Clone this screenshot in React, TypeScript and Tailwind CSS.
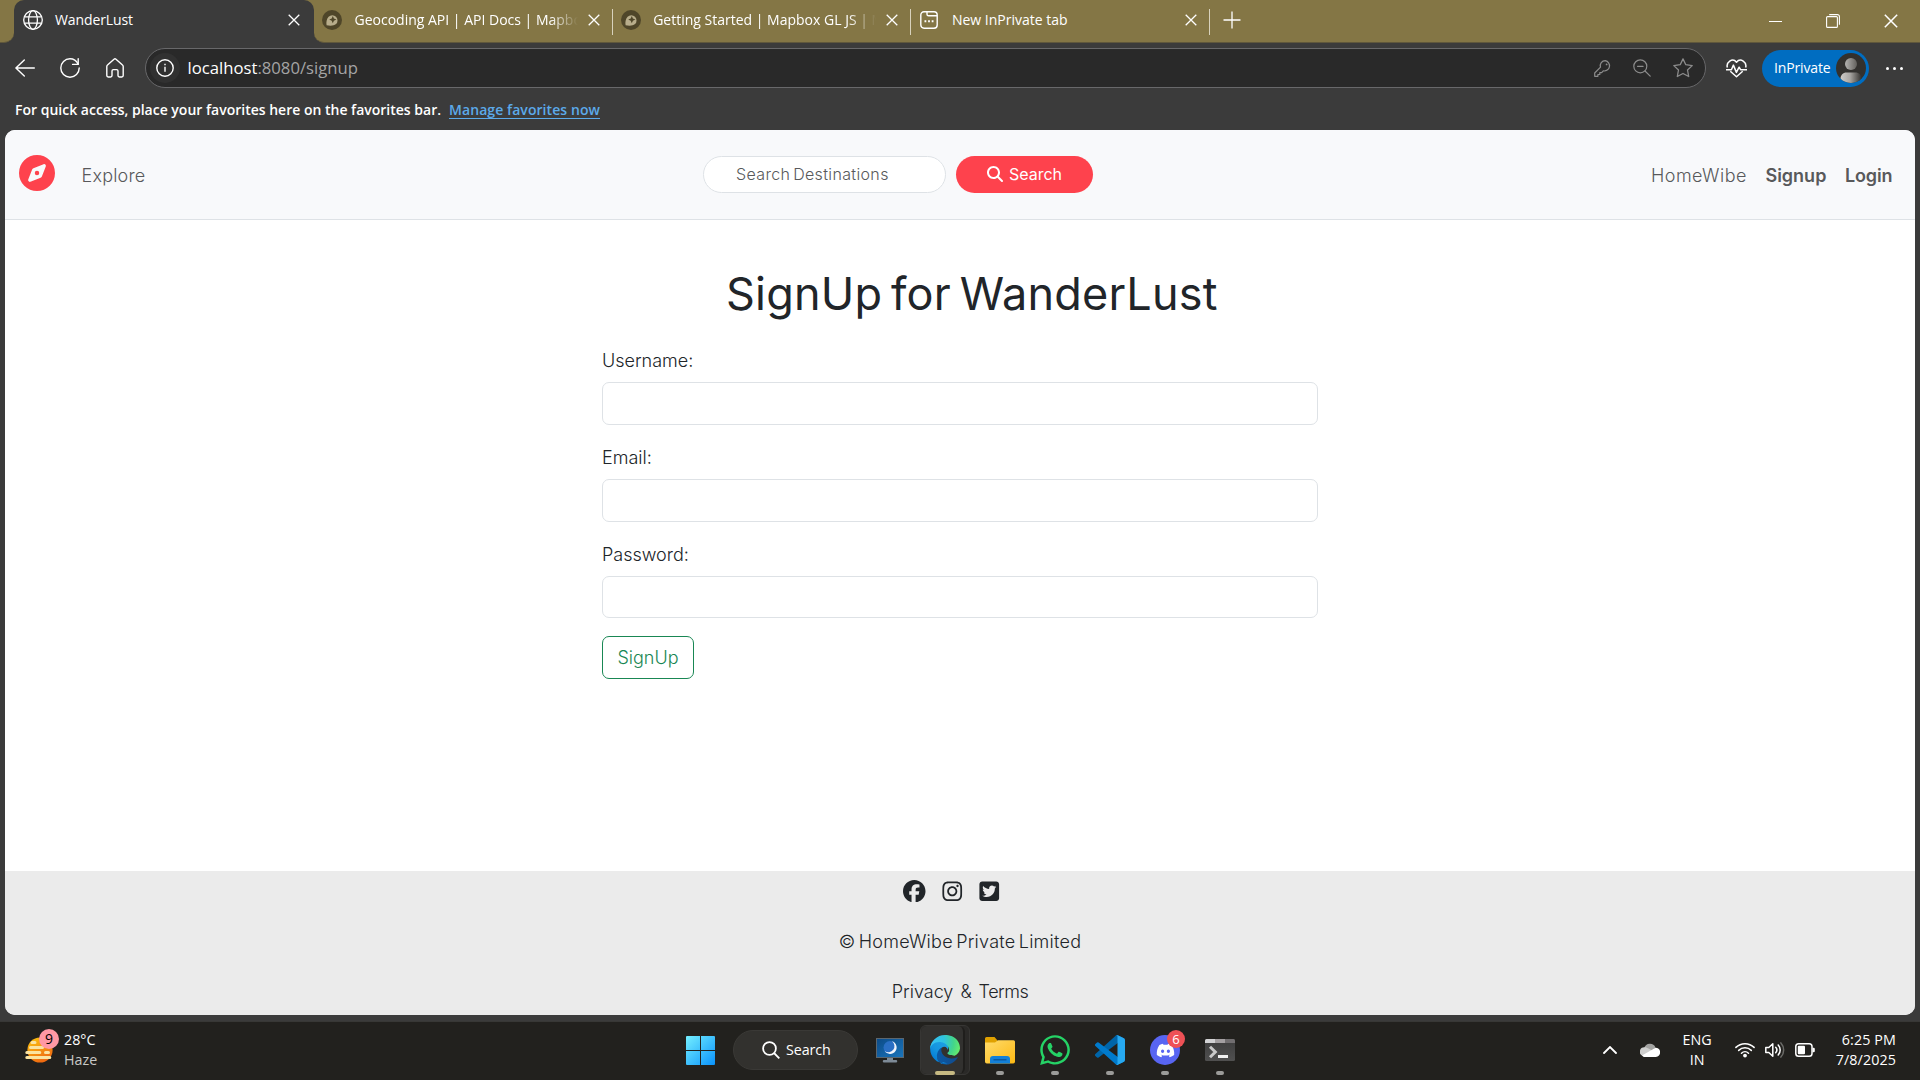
import React from 'react';
import type { ReactNode } from 'react';
import {
  FaCompass,
  FaDiscord,
  FaFacebook,
  FaInstagram,
  FaMagnifyingGlass,
  FaSquareTwitter,
  FaWhatsapp,
} from 'react-icons/fa6';

/* ---------- Browser icons ---------- */

function CloseIcon({ className }: { className: string }) {
  return (
    <svg viewBox="0 0 12 12" className={className} fill="none" stroke="currentColor" strokeWidth="1.3">
      <path d="M.7.7l10.6 10.6M11.3.7L.7 11.3" />
    </svg>
  );
}

function GlobeIcon() {
  return (
    <svg viewBox="0 0 20 20" className="size-5" fill="none" stroke="currentColor" strokeWidth="1.3">
      <circle cx="10" cy="10" r="9.3" />
      <ellipse cx="10" cy="10" rx="4.4" ry="9.3" />
      <path d="M1.6 6.8h16.8M1.6 13.2h16.8" />
    </svg>
  );
}

function MapboxIcon() {
  return (
    <svg viewBox="0 0 20 20" className="size-5">
      <circle cx="10" cy="10" r="10" fill="#4f4629" />
      <path d="M4.6 15.3c-.6-3 0-6.6 2-8.6a5.2 5.2 0 017.4 7.4c-2.1 2-6.2 2-9.4 1.2z" fill="#b8ad8b" />
      <path d="M10.8 6l1.1 2.5 2.5 1.1-2.5 1.1-1.1 2.5-1.1-2.5-2.5-1.1 2.5-1.1z" fill="#4f4629" />
    </svg>
  );
}

function InPrivateTabIcon() {
  return (
    <svg viewBox="0 0 18 18" className="mx-px size-[18px]" fill="none" stroke="currentColor" strokeWidth="1.4">
      <rect x=".8" y=".8" width="16.4" height="16.4" rx="3.2" />
      <path d="M7 1v2.2A1.6 1.6 0 008.6 4.8H17" />
      <path d="M4.5 10.3h1.8M8.1 10.3h1.8M11.7 10.3h1.8" strokeWidth="1.9" />
    </svg>
  );
}

function BackIcon() {
  return (
    <svg viewBox="0 0 20 18" className="h-[18px] w-5" fill="none" stroke="currentColor" strokeWidth="1.4" strokeLinecap="round" strokeLinejoin="round">
      <path d="M9.3.9L.9 9l8.4 8.1M1 9h18.3" />
    </svg>
  );
}

function ReloadIcon() {
  return (
    <svg viewBox="0 0 20 20" className="size-5" fill="none" stroke="currentColor" strokeWidth="1.4" strokeLinecap="round" strokeLinejoin="round">
      <path d="M19.200 10A9.200 9.200 0 1110 .8c3.500 0 6.500 2 8.100 5.400" />
      <path d="M18.200.8v5.600h-5.600" />
    </svg>
  );
}

function HomeIcon() {
  return (
    <svg viewBox="0 0 18 20" className="h-5 w-[18px]" fill="none" stroke="currentColor" strokeWidth="1.4" strokeLinejoin="round">
      <path d="M.8 8.500c0-.6.2-1.100.7-1.500L8 1.300a1.500 1.500 0 012 0L16.500 7c.5.4.7.900.7 1.500V17.600c0 .8-.6 1.400-1.400 1.400h-2.400c-.8 0-1.400-.6-1.400-1.400V13c0-.8-.6-1.400-1.400-1.400H7.400C6.600 11.600 6 12.200 6 13v4.600c0 .8-.6 1.400-1.400 1.400H2.200C1.400 19 .8 18.400.8 17.600z" />
    </svg>
  );
}

function InfoIcon() {
  return (
    <svg viewBox="0 0 18 18" className="size-[18px]" fill="none" stroke="currentColor" strokeWidth="1.4">
      <circle cx="9" cy="9" r="8.2" />
      <path d="M9 7.8v5M9 4.7v1.5" />
    </svg>
  );
}

function KeyIcon() {
  return (
    <svg viewBox="0 0 17 17" className="size-[17px]" fill="none" stroke="currentColor" strokeWidth="1.2" strokeLinejoin="round">
      <path d="M11.300.7a5 5 0 00-4.800 6.500L.7 13v3.300h3.200v-1.800h1.900v-1.900h1.900l1.600-1.700A5 5 0 1011.300.7z" />
      <circle cx="12.600" cy="4.400" r=".9" fill="currentColor" stroke="none" />
    </svg>
  );
}

function ZoomOutIcon() {
  return (
    <svg viewBox="0 0 18 18" className="size-[18px]" fill="none" stroke="currentColor" strokeWidth="1.2" strokeLinecap="round">
      <circle cx="7.300" cy="7.300" r="6.500" />
      <path d="M12 12l5.200 5.200M4.500 7.300h5.600" />
    </svg>
  );
}

function StarIcon() {
  return (
    <svg viewBox="0 0 20 20" className="size-5" fill="none" stroke="currentColor" strokeWidth="1.3" strokeLinejoin="round">
      <path d="M10 .9l2.800 5.800 6.400.9-4.700 4.400 1.200 6.500L10 15.500l-5.700 3 1.200-6.500L.8 7.600l6.400-.9z" />
    </svg>
  );
}

function HeartPulseIcon() {
  return (
    <svg viewBox="0 0 21 19" className="h-[19px] w-[21px]" fill="none" stroke="currentColor" strokeWidth="1.5" strokeLinejoin="round">
      <path d="M1.400 8.600C-.2 3.900 6.300-2 10.500 3.200c4.200-5.200 10.700.7 9.100 5.400" />
      <path d="M0 10.700h5.400l2-4.600 3 7.300 2.700-5.200 1.500 2.500H21" />
      <path d="M4.300 12.300l6.200 5.500 6.200-5.500" />
    </svg>
  );
}

function Avatar() {
  return (
    <svg viewBox="0 0 30 30" className="size-[30px]">
      <defs>
        <linearGradient id="avatar-head">
          <stop offset="0" stopColor="#b5b3b0" />
          <stop offset="1" stopColor="#62605c" />
        </linearGradient>
        <linearGradient id="avatar-body">
          <stop offset="0" stopColor="#cfccc8" />
          <stop offset=".45" stopColor="#aaa7a3" />
          <stop offset="1" stopColor="#33312e" />
        </linearGradient>
        <clipPath id="avatar-clip">
          <circle cx="15" cy="15" r="15" />
        </clipPath>
      </defs>
      <g clipPath="url(#avatar-clip)">
        <rect width="30" height="30" fill="#33312e" />
        <circle cx="15" cy="11" r="6" fill="url(#avatar-head)" />
        <path d="M4.500 30v-4c0-4 2.500-6.500 6-6.500h9c3.500 0 6 2.500 6 6.500v4z" fill="url(#avatar-body)" />
      </g>
    </svg>
  );
}

/* ---------- Taskbar icons ---------- */

function HazeIcon() {
  return (
    <svg viewBox="0 0 28 26" className="h-[26px] w-7">
      <defs>
        <linearGradient id="haze-sun" x1="0" y1="0" x2=".5" y2="1">
          <stop offset="0" stopColor="#fdc910" />
          <stop offset="1" stopColor="#ef6a10" />
        </linearGradient>
      </defs>
      <circle cx="15" cy="13" r="12.600" fill="url(#haze-sun)" />
      <g stroke="#fbe3a0" strokeWidth="3" strokeLinecap="round">
        <path d="M7 5.500h3M5.500 10.500h12M1.800 15.500h13M20.500 15.500h3M1.800 20.500h23" />
      </g>
    </svg>
  );
}

function WindowsIcon() {
  return (
    <svg viewBox="0 0 29 29" className="size-[29px]">
      <defs>
        <linearGradient id="win" x1="0" y1="0" x2="1" y2="1">
          <stop offset="0" stopColor="#74efff" />
          <stop offset="1" stopColor="#0a92fb" />
        </linearGradient>
      </defs>
      <path d="M1 0h13v14H0V1a1 1 0 011-1zM15 0h13a1 1 0 011 1v13H15zM0 15h14v14H1a1 1 0 01-1-1zM15 15h14v13a1 1 0 01-1 1H15z" fill="url(#win)" />
    </svg>
  );
}

function MonitorMoonIcon() {
  return (
    <svg viewBox="0 0 28 25" className="h-[25px] w-7">
      <defs>
        <linearGradient id="screen" x1="0" y1="0" x2="1" y2="1">
          <stop offset="0" stopColor="#0c4a86" />
          <stop offset="1" stopColor="#1a76bd" />
        </linearGradient>
      </defs>
      <path d="M11 19h6v3h3a1 1 0 010 2.500H8A1 1 0 018 22h3z" fill="#7d8a96" />
      <rect x=".5" y=".5" width="27" height="19" fill="url(#screen)" stroke="#5b6770" />
      <circle cx="14" cy="9.500" r="6.500" fill="#2a6fc4" />
      <path d="M16 3.200a6.500 6.500 0 11-7.300 9.800A6 6 0 0016 3.200z" fill="#f1f5fb" />
    </svg>
  );
}

function EdgeIcon() {
  return (
    <svg viewBox="0 0 256 256" className="size-[30px]">
      <defs>
        <linearGradient id="edge-a" x1="63" y1="177" x2="241" y2="177" gradientUnits="userSpaceOnUse">
          <stop offset="0" stopColor="#0c59a4" />
          <stop offset="1" stopColor="#114a8b" />
        </linearGradient>
        <linearGradient id="edge-b" x1="152" y1="100" x2="46" y2="230" gradientUnits="userSpaceOnUse">
          <stop offset="0" stopColor="#1b9de2" />
          <stop offset=".4" stopColor="#1595df" />
          <stop offset="1" stopColor="#0078d4" />
        </linearGradient>
        <radialGradient id="edge-c" cx="30" cy="55" r="230" gradientUnits="userSpaceOnUse">
          <stop offset="0" stopColor="#35c1f1" />
          <stop offset=".4" stopColor="#2fc2df" />
          <stop offset=".75" stopColor="#43d58a" />
          <stop offset="1" stopColor="#66eb6e" />
        </radialGradient>
      </defs>
      <path d="M231 190a94 94 0 01-10 5 102 102 0 01-36 6c-48 0-89-33-89-75a32 32 0 0117-28C69 100 58 145 58 171c0 75 69 82 84 82 8 0 20-2 27-5a128 128 0 0067-53c3-4-1-7-5-5z" fill="url(#edge-a)" />
      <path d="M106 241a79 79 0 01-23-21A81 81 0 01113 99c3-2 8-4 15-4a31 31 0 0125 12 32 32 0 016 19c0 0 26-98-71-98-42 0-79 40-79 80a130 130 0 0012 56 128 128 0 00157 67 76 76 0 01-60-6z" fill="url(#edge-b)" transform="translate(-8 6)" />
      <path d="M152 149c-1 1-3 3-3 7 0 3 2 6 6 9 19 13 55 12 55 12a79 79 0 0046-61c0-29-10-48-14-56C217 11 162 0 128 0A128 128 0 000 126c1-36 37-66 80-66 4 0 24 0 43 10 17 9 26 20 32 31 6 11 8 25 8 30 0 6-3 14-11 18z" fill="url(#edge-c)" />
    </svg>
  );
}

function FolderIcon() {
  return (
    <svg viewBox="0 0 30 27" className="h-[27px] w-[30px]">
      <defs>
        <linearGradient id="folder" x1="0" y1="0" x2="1" y2="1">
          <stop offset="0" stopColor="#ffdb6b" />
          <stop offset="1" stopColor="#fdb913" />
        </linearGradient>
      </defs>
      <path d="M0 1.500A1.500 1.500 0 011.500 0h8l3 3.500V8H0z" fill="#e0a100" />
      <path d="M0 5.500h10l3-2.200h15.500A1.500 1.500 0 0130 4.800v20a1.800 1.800 0 01-1.800 1.700H1.800A1.800 1.800 0 010 24.800z" fill="url(#folder)" />
      <path d="M5 26.500V22a3 3 0 013-3h14a3 3 0 013 3v4.500z" fill="#1380d8" />
      <path d="M8.500 22.800h13" stroke="#0a4f94" strokeWidth="1.2" />
    </svg>
  );
}

function VsCodeIcon() {
  return (
    <svg viewBox="0 0 100 100" className="size-[30px]">
      <path d="M96.500 10.800L75.900.9a6.200 6.200 0 00-7.100 1.200L1.300 63.600a4.200 4.200 0 000 6.200l5.500 5a4.200 4.200 0 005.300.2L93.400 13.400c2.700-2.100 6.600-.1 6.600 3.300v-.3c0-2.400-1.400-4.600-3.500-5.600z" fill="#0065a9" />
      <path d="M96.500 89.200l-20.600 9.900a6.200 6.200 0 01-7.100-1.200L1.300 36.400a4.200 4.200 0 010-6.200l5.500-5a4.200 4.200 0 015.300-.2l81.300 61.600c2.700 2.100 6.600.1 6.600-3.300v.3c0 2.400-1.400 4.600-3.500 5.600z" fill="#007acc" />
      <path d="M75.900 99.100a6.200 6.200 0 01-7.100-1.200c2.300 2.300 6.200.7 6.200-2.600V4.700c0-3.300-3.900-4.900-6.200-2.600A6.200 6.200 0 0175.900.9l20.600 9.900a6.200 6.200 0 013.500 5.600v67.200a6.200 6.200 0 01-3.500 5.600z" fill="#27a9f1" />
    </svg>
  );
}

function TerminalIcon() {
  return (
    <svg viewBox="0 0 30 22" className="h-[22px] w-[30px]">
      <defs>
        <linearGradient id="term" x1="0" y1="0" x2="0" y2="1">
          <stop offset="0" stopColor="#3d3d3d" />
          <stop offset="1" stopColor="#505050" />
        </linearGradient>
      </defs>
      <rect width="30" height="22" rx="1.500" fill="url(#term)" />
      <path d="M1.500 0H10v4H0V1.500A1.500 1.500 0 011.500 0z" fill="#d2d2d4" />
      <path d="M10 0h10v4H10z" fill="#a4a0a2" />
      <path d="M20 0h8.500A1.500 1.500 0 0130 1.500V4H20z" fill="#716e70" />
      <path d="M5 7.800L10.300 13 5 18.200" fill="none" stroke="#c9c9c9" strokeWidth="3" />
      <path d="M13 16h10v3H13z" fill="#f0f0f0" />
    </svg>
  );
}

function CloudIcon() {
  return (
    <svg viewBox="0 0 20 14" className="h-3.5 w-5">
      <path d="M4.200 5A6 6 0 0115.500 4.500L10 9z" fill="#a3a3a1" />
      <path d="M4.300 4.200c2 0 3.200.6 4.700 1.600l5 3L3 13a4.500 4.500 0 011.300-8.800z" fill="#cfcfce" />
      <path d="M2 12.400L11.600 7l3.700-2.300a4.600 4.600 0 01.5 9.200H4.500c-1 0-1.900-.6-2.500-1.500z" fill="#fff" />
    </svg>
  );
}

function WifiIcon() {
  return (
    <svg viewBox="0 0 20 16" className="h-4 w-5" fill="none" stroke="currentColor" strokeWidth="1.5" strokeLinecap="round">
      <path d="M.9 5.400a13 13 0 0118.200 0M3.700 8.400a9 9 0 0112.600 0M6.500 11.200a5 5 0 017 0" />
      <circle cx="10" cy="13.600" r="1.900" fill="currentColor" stroke="none" />
    </svg>
  );
}

function SpeakerIcon() {
  return (
    <svg viewBox="0 0 20 16" className="h-4 w-5" fill="none" stroke="currentColor" strokeWidth="1.5" strokeLinecap="round" strokeLinejoin="round">
      <path d="M.8 5.500h3l4-3.700v12.400l-4-3.700h-3z" />
      <path d="M10.700 5.300a4 4 0 010 5.400M13.200 3a7.300 7.300 0 010 10" />
      <path d="M15.900.9a10.500 10.500 0 010 14.200" stroke="#6b6b68" />
    </svg>
  );
}

function BatteryIcon() {
  return (
    <svg viewBox="0 0 20 14" className="h-3.5 w-5">
      <rect x=".8" y=".8" width="16.200" height="12.400" rx="2.800" fill="none" stroke="currentColor" strokeWidth="1.5" />
      <rect x="2.800" y="2.800" width="7.200" height="8.400" rx="1" fill="currentColor" />
      <path d="M17.500 4.700h1a1.300 1.300 0 011.300 1.300v2a1.300 1.300 0 01-1.300 1.300h-1z" fill="currentColor" />
    </svg>
  );
}

/* ---------- Browser chrome ---------- */

function Tab({ icon, title, fade }: { icon: ReactNode; title: string; fade?: boolean }) {
  return (
    <div className="flex h-full w-[298.7px] shrink-0 items-center pb-[3px] pl-2">
      <span className="flex w-5 shrink-0">{icon}</span>
      <span
        className={
          fade
            ? 'ml-[12.500px] w-[223px] overflow-hidden whitespace-nowrap [mask-image:linear-gradient(to_right,black_195px,transparent)]'
            : 'ml-[12.500px] w-[223px] overflow-hidden whitespace-nowrap'
        }
      >
        {title}
      </span>
      <CloseIcon className="ml-2.5 size-3" />
      <span className="ml-auto h-[26px] w-px translate-y-[2px] bg-[#d8d2bd]" />
    </div>
  );
}

function TitleBar() {
  return (
    <div className="flex h-[43px] bg-[linear-gradient(#847645_50%,#3b3b3b_50%)] text-sm text-white">
      <div className="w-3.5 rounded-br-[10px] border-b border-[#5f573c] bg-[#847645]" />
      <div className="flex w-[300px] items-center rounded-t-[10px] bg-[#3b3b3b] pb-[3px] pl-[9px]">
        <GlobeIcon />
        <span className="ml-3 w-[226px] tracking-[-0.1px]">WanderLust</span>
        <CloseIcon className="ml-[7px] size-3" />
      </div>
      <div className="flex flex-1 items-center rounded-bl-[10px] border-b border-[#5f573c] bg-[#847645]">
        <Tab icon={<MapboxIcon />} title="Geocoding API | API Docs | Mapbox" fade />
        <Tab icon={<MapboxIcon />} title="Getting Started | Mapbox GL JS | M" fade />
        <Tab icon={<InPrivateTabIcon />} title="New InPrivate tab" />
        <svg viewBox="0 0 18 18" className="mb-[3px] ml-[13px] size-[18px]" stroke="currentColor" strokeWidth="1.3">
          <path d="M9 .5v17M.5 9h17" />
        </svg>
        <div className="mr-[22px] ml-auto flex items-center gap-[44px]">
          <span className="h-px w-[13px] bg-white" />
          <svg viewBox="0 0 14 14" className="size-3.5" fill="none" stroke="currentColor" strokeWidth="1.1">
            <rect x=".6" y="2.600" width="10.800" height="10.800" rx="1" />
            <path d="M3.200.6h8.200a2 2 0 012 2v8.200" />
          </svg>
          <CloseIcon className="size-3.5" />
        </div>
      </div>
    </div>
  );
}

function AddressRow() {
  return (
    <div className="flex h-[50px] items-center pl-[15px] text-white">
      <BackIcon />
      <span className="ml-[25px]"><ReloadIcon /></span>
      <span className="ml-[26px]"><HomeIcon /></span>
      <div className="ml-[21px] flex h-10 w-[1561px] items-center rounded-full border border-[#68686a] bg-[#292929] pr-3 pl-1">
        <span className="flex size-[30px] items-center justify-center rounded-full bg-[#313131]">
          <InfoIcon />
        </span>
        <span className="ml-[7.500px] text-[16.700px] text-[#a4a4a4]">
          <span className="text-white">localhost</span>:8080/signup
        </span>
        <div className="ml-auto flex items-center gap-[22px] text-[#8c8c8c]">
          <KeyIcon />
          <ZoomOutIcon />
          <StarIcon />
        </div>
      </div>
      <span className="ml-5"><HeartPulseIcon /></span>
      <div className="ml-[15px] flex h-[37px] w-[107px] items-center justify-between rounded-full bg-[#006dc1] pr-[3px] pl-3 text-sm tracking-[-0.15px]">
        <span>InPrivate</span>
        <Avatar />
      </div>
      <div className="ml-[17px] flex gap-1">
        <span className="size-[3px] rounded-full bg-white" />
        <span className="size-[3px] rounded-full bg-white" />
        <span className="size-[3px] rounded-full bg-white" />
      </div>
    </div>
  );
}

function FavoritesBar() {
  return (
    <div className="flex h-[37px] items-center pb-1 pl-[15px] text-sm font-semibold text-white">
      For quick access, place your favorites here on the favorites bar.
      <span className="ml-2 border-b border-[#5caaea] leading-[17px] tracking-[0.07px] text-[#5caaea]">Manage favorites now</span>
    </div>
  );
}

/* ---------- Web page ---------- */

function Navbar() {
  return (
    <nav className="flex h-[90px] items-center border-b border-[#dee2e6] bg-[#f8f9fb] text-lg text-[#58595b]">
      <div className="flex w-[698px] items-center pl-[13.500px]">
        <FaCompass className="mb-1 size-9 text-[#fe424d]" />
        <span className="ml-[27px] pt-0.5 font-[350] tracking-[0.2px]">Explore</span>
      </div>
      <div className="flex h-[37px] w-[243px] items-center rounded-full border border-[#dee2e6] bg-white pb-px pl-8 text-base font-[350] tracking-[0.35px] [word-spacing:-2px]">
        Search Destinations
      </div>
      <div className="ml-2.5 flex h-[37px] w-[137px] items-center justify-center gap-[6px] rounded-full bg-[#fe424d] pb-px text-base text-white">
        <FaMagnifyingGlass className="size-4" />
        Search
      </div>
      <div className="ml-auto flex gap-[18.500px] pt-0.5 pr-[22.500px]">
        <span className="font-[350] tracking-[0.48px]">HomeWibe</span>
        <span className="font-semibold">Signup</span>
        <span className="font-semibold tracking-[-0.1px]">Login</span>
      </div>
    </nav>
  );
}

function Field({ label }: { label: string }) {
  return (
    <label className="mb-[18px] block">
      <span className="mb-2 block pt-px leading-[27px] font-[350]">{label}</span>
      <span className="block h-[42.750px] rounded-[7px] border border-[#dee2e6] bg-white" />
    </label>
  );
}

function SignupForm() {
  return (
    <main className="flex-1 pt-[47px]">
      <div className="mx-auto w-[716px] text-lg text-[#212529]">
        <h1 className="mb-[25px] ml-[124px] text-[45px] leading-[54px] font-[420] tracking-[0.2px] [word-spacing:-4px]">
          SignUp for WanderLust
        </h1>
        <Field label="Username:" />
        <Field label="Email:" />
        <Field label="Password:" />
        <button className="h-[42.750px] w-[92px] rounded-[7px] border border-[#198754] font-[350] text-[#198754]">
          SignUp
        </button>
      </div>
    </main>
  );
}

function Footer() {
  return (
    <footer className="h-36 bg-[#ebebeb] pt-[7px] text-center text-lg leading-[27px] font-[350] text-[#212529]">
      <div className="ml-[898px] flex h-[26px] items-center">
        <FaFacebook className="size-[22.500px]" />
        <FaInstagram className="ml-[15.500px] size-[22.500px]" />
        <FaSquareTwitter className="ml-[14px] size-[22.500px]" />
      </div>
      <div className="mt-6 tracking-[0.25px] [word-spacing:-2px]">© HomeWibe Private Limited</div>
      <div className="mt-[23px] flex justify-center gap-[7px]">
        <span>Privacy</span>
        <span>&amp;</span>
        <span className="tracking-[-0.500px]">Terms</span>
      </div>
    </footer>
  );
}

/* ---------- Taskbar ---------- */

function TaskIcon({ children }: { children: ReactNode }) {
  return (
    <div className="relative flex h-[50px] w-[30px] items-center justify-center">
      {children}
      <span className="absolute bottom-0 left-[11px] h-1 w-2 rounded-full bg-[#9b9b99]" />
    </div>
  );
}

function Taskbar() {
  return (
    <div className="flex h-[59px] items-center border-t border-[#383836] bg-[#22211e] pb-0.5 text-[14.300px] leading-5 text-white">
      <div className="flex w-[686px] items-center pl-[25px]">
        <div className="relative">
          <HazeIcon />
          <span className="absolute -top-2 left-3.5 flex size-5 items-center justify-center rounded-full bg-[#ff98a4] text-sm text-black">9</span>
        </div>
        <div className="ml-[11px]">
          <div>28°C</div>
          <div className="text-[#c8c8c6]">Haze</div>
        </div>
      </div>
      <WindowsIcon />
      <div className="ml-[18px] flex h-10 w-[125px] items-center rounded-full border border-[#3a3936] bg-[#32312e] pl-7">
        <svg viewBox="0 0 18 18" className="size-[18px]" fill="none" stroke="currentColor" strokeWidth="1.8">
          <circle cx="7.500" cy="7.500" r="6.400" />
          <path d="M12 12l5.300 5.300" />
        </svg>
        <span className="ml-1.5 tracking-[-0.1px]">Search</span>
      </div>
      <span className="ml-[18px]"><MonitorMoonIcon /></span>
      <div className="relative ml-4 flex h-[50px] w-[50px] rounded-md border border-[#373634] bg-[#2a2927]">
        <div className="flex w-11 items-center justify-center rounded-md border-r-2 border-[#1f1e1c] bg-[#32312f] pl-1.5">
          <EdgeIcon />
        </div>
        <span className="absolute -bottom-px left-3.5 h-1 w-5 rounded-full bg-[#c6b982]" />
      </div>
      <div className="ml-[15px] flex gap-[25px]">
        <TaskIcon><FolderIcon /></TaskIcon>
        <TaskIcon><FaWhatsapp className="size-[34px] shrink-0 text-[#25d366]" /></TaskIcon>
        <TaskIcon><VsCodeIcon /></TaskIcon>
        <TaskIcon>
          <span className="flex size-[30px] items-center justify-center rounded-full bg-[#5865f2]">
            <FaDiscord className="size-[19px]" />
          </span>
          <span className="absolute top-[5px] left-[17px] flex size-[18px] items-center justify-center rounded-full bg-[#ee5156] text-[13px]">6</span>
        </TaskIcon>
        <TaskIcon><TerminalIcon /></TaskIcon>
      </div>
      <div className="ml-auto flex items-center pr-6">
        <svg viewBox="0 0 14 8" className="h-2 w-3.5" fill="none" stroke="currentColor" strokeWidth="1.8" strokeLinecap="round">
          <path d="M1 7l6-6 6 6" />
        </svg>
        <span className="ml-[23px]"><CloudIcon /></span>
        <div className="ml-[23px] text-center">
          <div>ENG</div>
          <div>IN</div>
        </div>
        <div className="ml-[23px] flex items-center gap-2.5">
          <WifiIcon />
          <SpeakerIcon />
          <BatteryIcon />
        </div>
        <div className="ml-[21px] text-right tracking-[0.1px]">
          <div>6:25 PM</div>
          <div>7/8/2025</div>
        </div>
      </div>
    </div>
  );
}

export default function App() {
  return (
    <div className="flex h-[1080px] w-[1920px] flex-col overflow-hidden bg-[#3b3b3b] font-['Open_Sans',sans-serif]">
      <TitleBar />
      <AddressRow />
      <FavoritesBar />
      <div className="mx-[5px] mb-1.5 flex h-[885px] flex-col overflow-hidden rounded-[10px] bg-white font-['Inter',sans-serif]">
        <Navbar />
        <SignupForm />
        <Footer />
      </div>
      <Taskbar />
    </div>
  );
}
